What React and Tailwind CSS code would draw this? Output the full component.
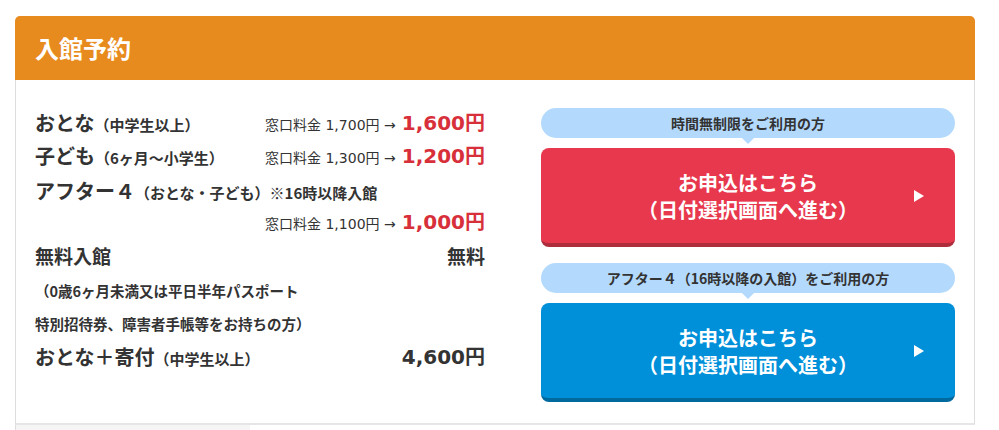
// Admission reservation panel

const FONT = { fontFamily: '"DejaVu Sans", "Noto Sans CJK JP", sans-serif' }
const JP = { fontFamily: '"Noto Sans CJK JP", sans-serif' }

function PriceRow({ label, sub, was, now, h = 'h-[33px]' }) {
  return (
    <div className={`flex items-center justify-between ${h}`}>
      <div className="flex items-baseline">
        {label && <span className="text-xl font-bold" style={JP}>{label}</span>}
        {sub && <span className="text-[15px] font-bold" style={JP}>{sub}</span>}
      </div>
      <div className="flex items-baseline">
        <span className="text-sm">窓口料金 {was}円 →</span>
        <span className="ml-1.5 text-xl font-bold text-[#d8303b]">{now}円</span>
      </div>
    </div>
  )
}

function Bubble({ children }) {
  return (
    <div className="relative flex h-[30px] items-center justify-center rounded-full bg-[#b3dafd] text-sm font-bold text-[#333]" style={JP}>
      {children}
      <span className="absolute left-1/2 top-full -translate-x-1/2 border-x-[6px] border-t-[6px] border-x-transparent border-t-[#b3dafd]" />
    </div>
  )
}

function ApplyButton({ tone }) {
  const tones = {
    red:  'bg-[#e8384d] border-[#ad2d3d]',
    blue: 'bg-[#0090d9] border-[#006a9f]',
  }
  return (
    <button className={`relative mt-[10px] flex h-[99px] w-full flex-col items-center justify-center rounded-lg border-b-4 text-xl font-bold leading-[27px] text-white ${tones[tone]}`} style={JP}>
      <span>お申込はこちら</span>
      <span>（日付選択画面へ進む）</span>
      <span className="absolute right-[31px] top-1/2 -translate-y-1/2 border-y-[6px] border-l-[10px] border-y-transparent border-l-white" />
    </button>
  )
}

export default function App() {
  return (
    <div className="min-h-[430px] bg-white pt-4 text-[#333]" style={FONT}>
      <div className="ml-[15px] w-[960px]">
        {/* header */}
        <div className="flex h-16 items-center rounded-t-[5px] bg-[#e88b1e] pl-5">
          <h2 className="text-2xl font-bold text-white" style={JP}>入館予約</h2>
        </div>

        {/* body */}
        <div className="flex h-[345px] justify-between border-x border-b-2 border-x-[#dddddd] border-b-[#e6e6e6] px-[19px] pt-[26px]">
          <div className="w-[450px]">
            <PriceRow label="おとな" sub="（中学生以上）" was="1,700" now="1,600" />
            <PriceRow label="子ども" sub="（6ヶ月～小学生）" was="1,300" now="1,200" />
            <div className="flex h-[33px] items-baseline pt-[5px]" style={JP}>
              <span className="text-xl font-bold">アフター４</span>
              <span className="text-[15px] font-bold">（おとな・子ども）※16時以降入館</span>
            </div>
            <PriceRow was="1,100" now="1,000" h="h-[34px]" />
            <div className="flex h-[35px] items-center justify-between text-[19px] font-bold" style={JP}>
              <span>無料入館</span>
              <span>無料</span>
            </div>
            <div className="flex h-[34px] items-center text-[14.5px] font-bold" style={JP}>（0歳6ヶ月未満又は平日半年パスポート</div>
            <div className="flex h-[32px] items-center text-[14.5px] font-bold" style={JP}>特別招待券、障害者手帳等をお持ちの方）</div>
            <div className="flex h-[33px] items-center justify-between">
              <div className="flex items-baseline" style={JP}>
                <span className="text-xl font-bold">おとな＋寄付</span>
                <span className="text-[15px] font-bold">（中学生以上）</span>
              </div>
              <span className="text-xl font-bold">4,600円</span>
            </div>
          </div>

          <div className="mt-[2px] w-[414px]">
            <Bubble>時間無制限をご利用の方</Bubble>
            <ApplyButton tone="red" />
            <div className="mt-4">
              <Bubble>アフター４（16時以降の入館）をご利用の方</Bubble>
            </div>
            <ApplyButton tone="blue" />
          </div>
        </div>

        {/* next block edge */}
        <div className="h-[6px] border-l border-[#dddddd]">
          <div className="h-full w-[234px] bg-[#f5f5f5]" />
        </div>
      </div>
    </div>
  )
}
